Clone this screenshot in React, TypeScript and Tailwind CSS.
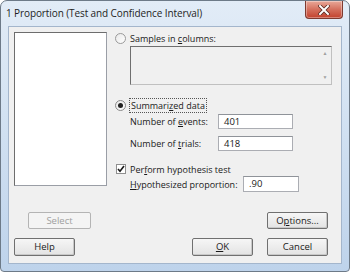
import React from "react";

const F = { fontFamily: "'Open Sans', Lato, sans-serif" };

function U({ children }: { children: React.ReactNode }) {
  return <span className="underline underline-offset-[1px]">{children}</span>;
}

function Btn({ children, w = "w-[61px]", h = "h-[18px]", disabled = false, cls = "" }: { children: React.ReactNode; w?: string; h?: string; disabled?: boolean; cls?: string }) {
  return (
    <div
      className={`${w} ${h} ${cls} flex items-center justify-center rounded-[2px] border text-[9.5px] leading-none ${
        disabled
          ? "border-[#b4b4b4] bg-[#f4f4f4] text-[#a0a0a0]"
          : "border-[#707070] bg-gradient-to-b from-[#f6f6f6] to-[#e3e3e3] text-[#1a1a1a] shadow-[inset_-1px_-1px_0_#c8c8c8]"
      }`}
    >
      {children}
    </div>
  );
}

function Input({ value, w, h = "h-[15px]" }: { value: string; w: string; h?: string }) {
  return (
    <div className={`${w} ${h} flex items-center border border-[#abadb3] border-t-[#8f9399] bg-white pl-[5px] text-[9.5px] leading-none`}>
      {value}
    </div>
  );
}

export default function App() {
  return (
    <div style={F} className="relative h-[272px] w-[350px] overflow-hidden rounded-t-[7px] rounded-b-[4px] border border-[#6d7a88] bg-gradient-to-b from-[#e2ecf7] via-[#d0e0f1] to-[#bed3eb] text-[#1a1a1a]">
      {/* title bar */}
      <div className="flex h-[25px] items-start justify-between">
        <div className="pl-[5px] pt-[6px] text-[10px] leading-[13px] tracking-[-0.1px] text-[#1e1e1e]">1 Proportion (Test and Confidence Interval)</div>
        <div className="mr-[6px] flex h-[18px] w-[38px] items-center justify-center rounded-b-[4px] border border-t-0 border-[#7e3a30] bg-gradient-to-b from-[#e8a899] via-[#d46f5d] to-[#c2402c] shadow-[inset_0_0_0_1px_rgba(255,255,255,0.35)]">
          <svg width="12" height="10" viewBox="0 0 12 10">
            <path d="M2 1 L10 9 M10 1 L2 9" stroke="#5a2a22" strokeWidth="3.6" strokeLinecap="square" />
            <path d="M2 1 L10 9 M10 1 L2 9" stroke="#ffffff" strokeWidth="2" strokeLinecap="square" />
          </svg>
        </div>
      </div>

      {/* client */}
      <div className="mx-[7px] h-[238px] border border-[#a4b6cc] bg-[#f0f0f0] px-[5px] text-[9px] leading-none">
        <div className="mt-[5px] flex">
          <div className="h-[154px] w-[93px] border border-[#9a9ea6] border-l-[#6d6d6d] border-t-[#6d6d6d] bg-white" />
          <div className="ml-[7px] flex w-[218px] flex-col">
            <div className="flex h-[12px] items-center">
              <div className="ml-[1px] h-[11px] w-[11px] rounded-full border border-[#9a9a9a] bg-gradient-to-br from-[#e8e8e8] to-white" />
              <span className="ml-[4px]">Samples in <U>c</U>olumns:</span>
            </div>
            <div className="ml-[16px] mt-[2px] flex h-[39px] w-[202px] border border-[#c0c0c0] border-l-[#6f6f6f] border-t-[#6f6f6f] bg-[#f0f0f0]">
              <div className="flex-1" />
              <div className="flex w-[12px] flex-col items-center justify-between py-[4px] text-[5px] text-[#a0a0a0]">
                <span>▲</span>
                <span>▼</span>
              </div>
            </div>
            <div className="mt-[12px] flex h-[16px] items-center">
              <div className="ml-[1px] flex h-[11px] w-[11px] items-center justify-center rounded-full border border-[#8a8a8a] bg-gradient-to-br from-[#e8e8e8] to-white">
                <div className="h-[5px] w-[5px] rounded-full bg-[#222]" />
              </div>
              <span className="ml-[3px] border border-dotted border-[#555] px-[1px] py-[2px]">Summari<U>z</U>ed data</span>
            </div>
            <div className="mt-[1px] flex h-[15px] items-center">
              <span className="ml-[16px] w-[88px]">Number of <U>e</U>vents:</span>
              <Input value="401" w="w-[75px]" />
            </div>
            <div className="mt-[7px] flex h-[15px] items-center">
              <span className="ml-[16px] w-[88px]">Number of <U>t</U>rials:</span>
              <Input value="418" w="w-[75px]" />
            </div>
            <div className="mt-[12px] flex h-[12px] items-center">
              <div className="ml-[2px] flex h-[10px] w-[10px] items-center justify-center border border-[#8f8f8f] bg-white">
                <svg width="8" height="8" viewBox="0 0 8 8">
                  <path d="M1 4 L3 6.3 L7 1" fill="none" stroke="#1a1a1a" strokeWidth="1.6" />
                </svg>
              </div>
              <span className="ml-[4px]">Per<U>f</U>orm hypothesis test</span>
            </div>
            <div className="mt-[1px] flex h-[16px] items-center">
              <span className="ml-[16px] w-[113px] whitespace-nowrap"><U>H</U>ypothesized proportion:</span>
              <Input value=".90" w="w-[56px]" h="h-[16px]" />
            </div>
          </div>
        </div>

        <div className="mt-[20px] flex justify-between">
          <Btn disabled cls="ml-[14px]" w="w-[63px]" h="h-[17px]">Select</Btn>
          <Btn cls="mr-[8px]" h="h-[17px]">O<U>p</U>tions...</Btn>
        </div>
        <div className="mt-[9px] flex items-center">
          <Btn>Help</Btn>
          <Btn cls="ml-[117px]"><U>O</U>K</Btn>
          <Btn cls="ml-[14px]">Cancel</Btn>
        </div>
      </div>
    </div>
  );
}
